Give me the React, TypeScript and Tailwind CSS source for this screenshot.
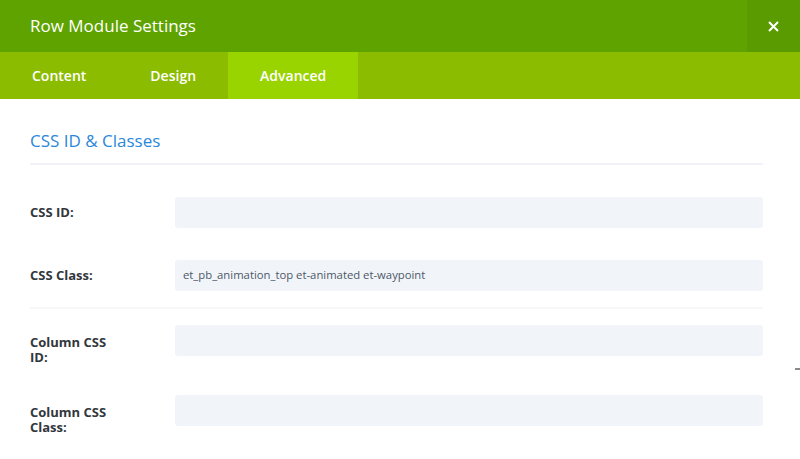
import React from "react";

const tabs = [
  { label: "Content", active: false },
  { label: "Design", active: false },
  { label: "Advanced", active: true },
];

function Field({
  label,
  value,
  className,
  labelPad,
}: {
  label: string;
  value?: string;
  className: string;
  labelPad: string;
}) {
  return (
    <div className={`flex items-start ${className}`}>
      <label
        className={`w-[80px] shrink-0 text-[13px] font-bold leading-[15px] text-[#32373c] ${labelPad}`}
      >
        {label}
      </label>
      <div className="ml-auto flex h-[31px] w-[588px] items-center rounded-[3px] bg-[#f1f4f9] px-2 text-[11.3px] text-[#4c5866]">
        {value}
      </div>
    </div>
  );
}

export default function App() {
  return (
    <div
      className="relative h-[459px] w-[800px] overflow-hidden bg-white"
      style={{ fontFamily: '"Open Sans", "Noto Sans", sans-serif' }}
    >
      {/* Header */}
      <header className="flex h-[52px] items-stretch bg-[#5ea300]">
        <h1 className="flex flex-1 items-center pl-[30px] text-[17px] text-white">
          Row Module Settings
        </h1>
        <button className="flex w-[53px] items-center justify-center bg-[#599b00] text-white">
          <svg width="11" height="11" viewBox="0 0 11 11">
            <path d="M1 1L10 10M10 1L1 10" stroke="white" strokeWidth="2" />
          </svg>
        </button>
      </header>

      {/* Tabs */}
      <nav className="flex h-[47px] bg-[#8bbc00]">
        {tabs.map((t) => (
          <div
            key={t.label}
            className={`flex items-center px-8 text-[14px] font-semibold text-white ${
              t.active ? "bg-[#99d300]" : ""
            }`}
          >
            {t.label}
          </div>
        ))}
      </nav>

      <main className="pl-[30px] pr-[37px]">
        <h2 className="mt-[30px] pb-[10px] text-[17px] leading-[24px] text-[#2b87da]">
          CSS ID &amp; Classes
        </h2>
        <div className="h-[2px] bg-[#f1f3f6]" />

        <Field label="CSS ID:" className="mt-[32px]" labelPad="pt-[8px]" />
        <Field
          label="CSS Class:"
          value="et_pb_animation_top et-animated et-waypoint"
          className="mt-[32px]"
          labelPad="pt-[8px]"
        />
        <div className="mt-[16px] h-[2px] bg-[#f6f7f9]" />
        <Field
          label="Column CSS ID:"
          className="mt-[16px]"
          labelPad="pt-[10px]"
        />
        <Field
          label="Column CSS Class:"
          className="mt-[30px]"
          labelPad="pt-[10px]"
        />
      </main>

      <div className="absolute right-0 top-[368px] h-[2px] w-[5px] bg-[#8a8a8a]" />
    </div>
  );
}
